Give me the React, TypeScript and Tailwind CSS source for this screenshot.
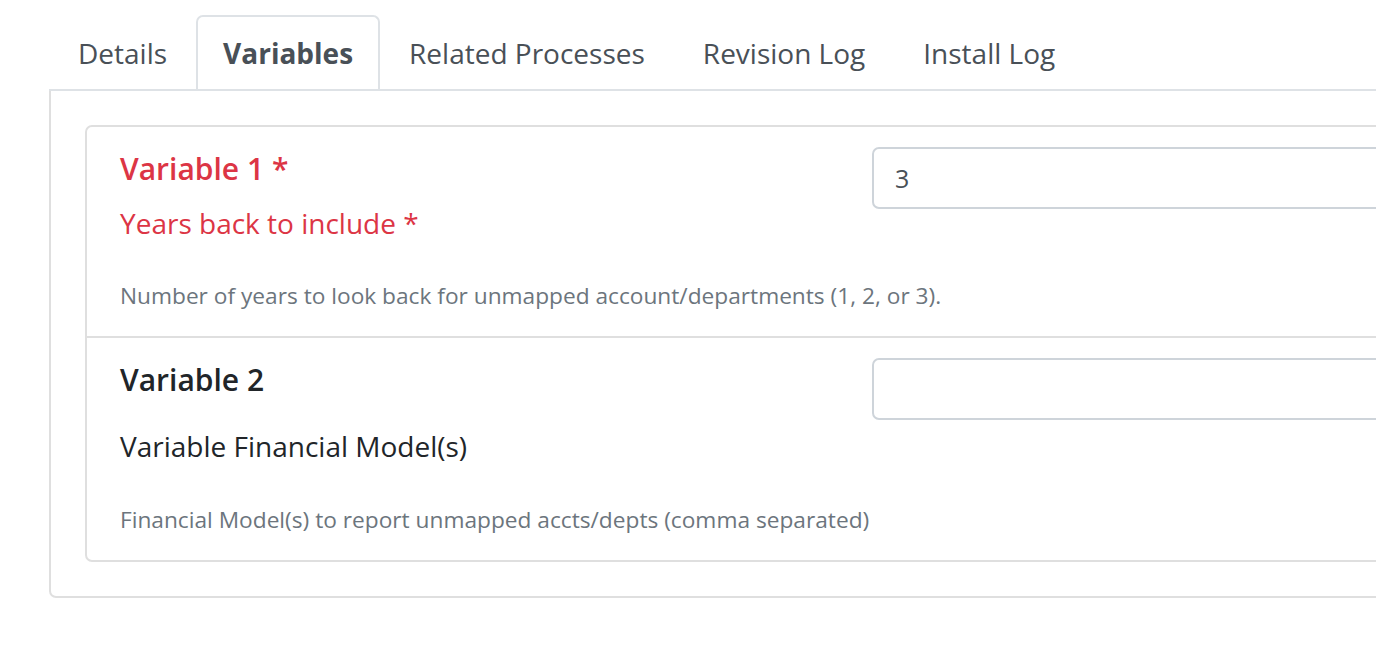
import React, { useState } from 'react';

const tabs = ['Details', 'Variables', 'Related Processes', 'Revision Log', 'Install Log'];

interface Variable {
  title: string;
  label: string;
  help: string;
  value: string;
  required: boolean;
}

const variables: Variable[] = [
  {
    title: 'Variable 1',
    label: 'Years back to include',
    help: 'Number of years to look back for unmapped account/departments (1, 2, or 3).',
    value: '3',
    required: true,
  },
  {
    title: 'Variable 2',
    label: 'Variable Financial Model(s)',
    help: 'Financial Model(s) to report unmapped accts/depts (comma separated)',
    value: '',
    required: false,
  },
];

function VariableRow({ v, last }: { v: Variable; last: boolean }) {
  const [value, setValue] = useState(v.value);
  const tone = v.required ? 'text-[#dc3545]' : 'text-[#212529]';
  return (
    <div className={`flex pl-[33px] pt-[20px] pb-[25px] ${last ? '' : 'border-b-2 border-[#dfdfdf]'}`}>
      <div className="w-[752px] shrink-0">
        <h5 className={`text-[30px] font-semibold leading-[40px] mt-[2px] ${tone}`}>
          {v.title}
          {v.required && ' *'}
        </h5>
        <label className={`block text-[28px] leading-[36px] ${v.required ? 'mt-[16px]' : 'mt-[28px]'} ${tone}`}>
          {v.label}
          {v.required && ' *'}
        </label>
        <p
          className={`text-[22.7px] leading-[30px] text-[#6c757d] whitespace-nowrap ${
            v.required ? 'mt-[40px]' : 'mt-[41px]'
          }`}
        >
          {v.help}
        </p>
      </div>
      <div className="flex-1">
        <input
          value={value}
          onChange={(e) => setValue(e.target.value)}
          className="w-full h-[62px] border-2 border-[#ced4da] rounded-[7px] px-[21px] text-[25px] text-[#495057] outline-none"
        />
      </div>
    </div>
  );
}

export default function App() {
  const [active, setActive] = useState('Variables');

  return (
    <div className="w-screen h-screen overflow-hidden bg-white" style={{ fontFamily: '"Open Sans", sans-serif' }}>
      <div className="w-[1700px] pl-[49px] pt-[15px]">
        <ul className="flex border-b-2 border-[#dee2e6]">
          {tabs.map((t) => (
            <li key={t}>
              <button
                onClick={() => setActive(t)}
                className={`h-[74px] text-[28px] rounded-t-[7px] border-2 border-b-0 ${
                  active === t
                    ? 'px-[25px] border-[#dee2e6] font-bold text-[#495057] bg-white'
                    : 'px-[27px] border-transparent text-[#495057]'
                }`}
              >
                {t}
              </button>
            </li>
          ))}
        </ul>
        <div className="border-2 border-t-0 border-[#dfdfdf] rounded-b-[7px] pl-[34px] pt-[34px] pb-[34px]">
          <div className="border-2 border-[#dfdfdf] rounded-[7px]">
            {variables.map((v, i) => (
              <VariableRow key={v.title} v={v} last={i === variables.length - 1} />
            ))}
          </div>
        </div>
      </div>
    </div>
  );
}
